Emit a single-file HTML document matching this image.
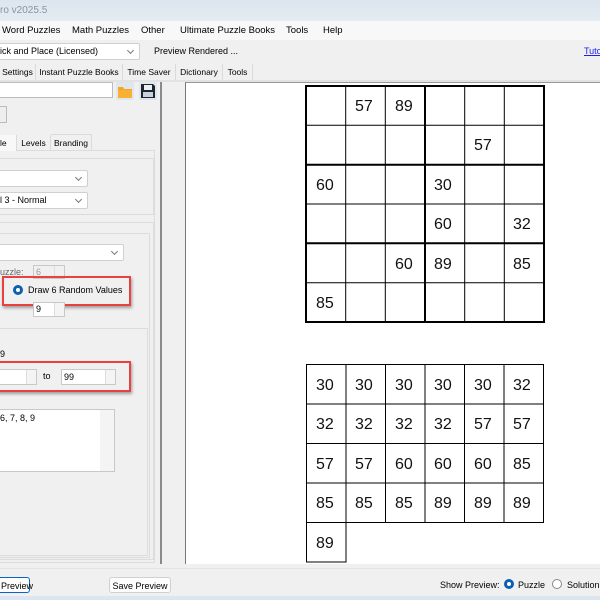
<!DOCTYPE html>
<html><head><meta charset="utf-8"><style>
*{margin:0;padding:0;box-sizing:border-box}
body{width:600px;height:600px;overflow:hidden;background:#f0f0f0;font-family:"Liberation Sans",sans-serif;font-size:9px;color:#000;position:relative}
.a{position:absolute;white-space:nowrap}
.box{position:absolute;background:#fff;border:1px solid #ababab}
.dd{position:absolute;background:#fff;border:1px solid #d0d0d0;border-radius:2px}
.dd:after{content:"";position:absolute;right:6px;top:4px;width:4px;height:4px;border-right:1px solid #777;border-bottom:1px solid #777;transform:rotate(45deg)}
.grp{position:absolute;border:1px solid #dcdcdc}
.red{position:absolute;border:2px solid #e8413f;box-shadow:1px 2px 3px rgba(0,0,0,.35)}
.sp{position:absolute;background:#fff;border:1px solid #c8c8c8}
.sp i{position:absolute;right:0;top:0;bottom:0;width:10px;border-left:1px solid #ddd;background:#f4f4f4}
.rad{position:absolute;width:10px;height:10px;border-radius:50%}
.tab{position:absolute;height:16px;border-right:1px solid #dadada;padding-top:3px;white-space:nowrap;text-align:center;font-size:8.5px}
.m{position:absolute;top:25px;font-size:9.5px;white-space:nowrap}
</style></head><body>
<div class="a" style="left:0;top:0;width:600px;height:21px;background:linear-gradient(#dce5ee,#e4ebf2)"></div>
<div class="a" style="left:0;top:5px;font-size:10px;color:#8a95a0">ro v2025.5</div>
<div class="a" style="left:0;top:21px;width:600px;height:19px;background:#f8f8f8"></div>
<div class="m" style="left:2px">Word Puzzles</div>
<div class="m" style="left:72px">Math Puzzles</div>
<div class="m" style="left:141px">Other</div>
<div class="m" style="left:180px">Ultimate Puzzle Books</div>
<div class="m" style="left:286px">Tools</div>
<div class="m" style="left:323px">Help</div>
<div class="dd" style="left:-4px;top:43px;width:144px;height:17px"></div>
<div class="a" style="left:0;top:46px">ick and Place (Licensed)</div>
<div class="a" style="left:154px;top:46px">Preview Rendered ...</div>
<div class="a" style="left:584px;top:46px;color:#2020ee;text-decoration:underline">Tuto</div>
<div class="a" style="left:0;top:80px;width:600px;height:2px;background:#e2e2e2"></div>
<div class="tab" style="left:0;top:64px;width:36px">Settings</div>
<div class="tab" style="left:36px;top:64px;width:87px">Instant Puzzle Books</div>
<div class="tab" style="left:123px;top:64px;width:53px">Time Saver</div>
<div class="tab" style="left:176px;top:64px;width:47px">Dictionary</div>
<div class="tab" style="left:223px;top:64px;width:30px">Tools</div>
<div class="box" style="left:-2px;top:82px;width:115px;height:16px;border-color:#bcbcbc"></div>
<svg class="a" style="left:116px;top:82px" width="18" height="18"><rect x="0" y="0" width="18" height="18" rx="2" fill="#dfe6ee"/><path d="M2 5h5l1 2h8v9H2z" fill="#f5a623"/><path d="M2 8h14v8H2z" fill="#f8b133"/></svg>
<svg class="a" style="left:139px;top:82px" width="18" height="18"><rect x="0" y="0" width="18" height="18" rx="2" fill="#dfe6ee"/><path d="M2 2h12l2 2v12H2z" fill="#1d2630"/><rect x="5" y="3" width="8" height="5" fill="#e8eef4"/><rect x="4" y="10" width="10" height="5" fill="#c8d2dc"/></svg>
<div class="a" style="left:0;top:106px;width:7px;height:17px;border:1px solid #bbb;border-left:none;background:#eee"></div>
<div class="a" style="left:0;top:150px;width:155px;height:413px;border:1px solid #dcdcdc;border-left:none;background:#f0f0f0"></div>
<div class="tab" style="left:0;top:135px;width:17px;background:#f8f8f8;text-align:left">le</div>
<div class="tab" style="left:17px;top:135px;width:34px">Levels</div>
<div class="tab" style="left:51px;top:134px;width:41px;height:17px;border-top:1px solid #dadada">Branding</div>
<div class="grp" style="left:-2px;top:158px;width:156px;height:57px"></div>
<div class="dd" style="left:-2px;top:170px;width:90px;height:17px"></div>
<div class="dd" style="left:-2px;top:192px;width:90px;height:17px"></div>
<div class="a" style="left:0;top:195px">l 3 - Normal</div>
<div class="grp" style="left:-2px;top:222px;width:156px;height:338px"></div>
<div class="grp" style="left:-2px;top:233px;width:152px;height:325px"></div>
<div class="dd" style="left:-2px;top:244px;width:126px;height:17px"></div>
<div class="a" style="left:0;top:267px;color:#666">uzzle:</div>
<div class="sp" style="left:33px;top:265px;width:32px;height:14px;background:#f0f0f0"><span style="position:absolute;left:2px;top:1px;color:#999">6</span><i style="background:#f0f0f0"></i></div>
<div class="red" style="left:2px;top:276px;width:129px;height:30px"></div>
<div class="rad" style="left:13px;top:285px;border:3px solid #0a5fb5;background:#fff"></div>
<div class="a" style="left:28px;top:285px">Draw 6 Random Values</div>
<div class="sp" style="left:33px;top:302px;width:32px;height:15px"><span style="position:absolute;left:2px;top:1px">9</span><i></i></div>
<div class="grp" style="left:-2px;top:328px;width:150px;height:228px"></div>
<div class="a" style="left:0;top:349px">9</div>
<div class="red" style="left:-3px;top:361px;width:134px;height:31px"></div>
<div class="sp" style="left:-2px;top:369px;width:39px;height:16px"><i></i></div>
<div class="a" style="left:43px;top:371px">to</div>
<div class="sp" style="left:61px;top:369px;width:55px;height:16px"><span style="position:absolute;left:2px;top:2px">99</span><i></i></div>
<div class="box" style="left:-2px;top:409px;width:117px;height:63px;border-color:#c8c8c8"><span style="position:absolute;left:1px;top:3px">6, 7, 8, 9</span><i style="position:absolute;right:0;top:0;bottom:0;width:14px;background:#f4f4f4"></i></div>
<div class="a" style="left:160px;top:82px;width:2px;height:482px;background:#8a8a8a"></div>
<div class="a" style="left:185px;top:82px;width:415px;height:482px;background:#fff;border-left:1px solid #777;border-top:1px solid #999"></div>
<svg class="a" style="left:0;top:0" width="600" height="600" font-family="Liberation Sans, sans-serif" font-size="16">
<g stroke="#000" stroke-width="1">
<path d="M345.7 86V322M385.3 86V322M464.7 86V322M504.3 86V322M306 125.3H544M306 204H544M306 282.7H544"/>
</g>
<g stroke="#000" stroke-width="2" fill="none">
<rect x="306" y="86" width="238" height="236"/>
<path d="M425 86V322M306 164.7H544M306 243.3H544"/>
</g>
<g fill="#111">
<text x="355" y="111">57</text><text x="395" y="111">89</text>
<text x="474" y="150">57</text>
<text x="316" y="190">60</text><text x="434" y="190">30</text>
<text x="434" y="229">60</text><text x="513" y="229">32</text>
<text x="395" y="269">60</text><text x="434" y="269">89</text><text x="513" y="269">85</text>
<text x="316" y="308">85</text>
</g>
<g stroke="#000" stroke-width="1" fill="none">
<rect x="306.5" y="364.5" width="237" height="158"/>
<path d="M346 364V522M385.5 364V522M425 364V522M464.5 364V522M504 364V522M306 404H544M306 443.5H544M306 483H544"/>
<rect x="306.5" y="522.5" width="39.5" height="39.5"/>
</g>
<g fill="#111">
<text x="316" y="390">30</text><text x="355" y="390">30</text><text x="395" y="390">30</text><text x="434" y="390">30</text><text x="474" y="390">30</text><text x="513" y="390">32</text>
<text x="316" y="429">32</text><text x="355" y="429">32</text><text x="395" y="429">32</text><text x="434" y="429">32</text><text x="474" y="429">57</text><text x="513" y="429">57</text>
<text x="316" y="469">57</text><text x="355" y="469">57</text><text x="395" y="469">60</text><text x="434" y="469">60</text><text x="474" y="469">60</text><text x="513" y="469">85</text>
<text x="316" y="508">85</text><text x="355" y="508">85</text><text x="395" y="508">85</text><text x="434" y="508">89</text><text x="474" y="508">89</text><text x="513" y="508">89</text>
<text x="316" y="548">89</text>
</g>
</svg>
<div class="a" style="left:0;top:568px;width:600px;height:1px;background:#e4e4e4"></div>
<div class="a" style="left:-6px;top:577px;width:36px;height:16px;border:1px solid #0a64c8;border-radius:3px;background:#fdfdfd;padding:3px 0 0 6px">Preview</div>
<div class="a" style="left:109px;top:577px;width:62px;height:16px;border:1px solid #d0d0d0;border-radius:3px;background:#fdfdfd;text-align:center;padding-top:3px">Save Preview</div>
<div class="a" style="left:440px;top:580px">Show Preview:</div>
<div class="rad" style="left:504px;top:579px;border:3px solid #0a5fb5;background:#fff"></div>
<div class="a" style="left:518px;top:580px">Puzzle</div>
<div class="rad" style="left:552px;top:579px;border:1px solid #888;background:#fff"></div>
<div class="a" style="left:567px;top:580px">Solution</div>
<div class="a" style="left:0;top:596px;width:600px;height:4px;background:#dde6f0"></div>
</body></html>
